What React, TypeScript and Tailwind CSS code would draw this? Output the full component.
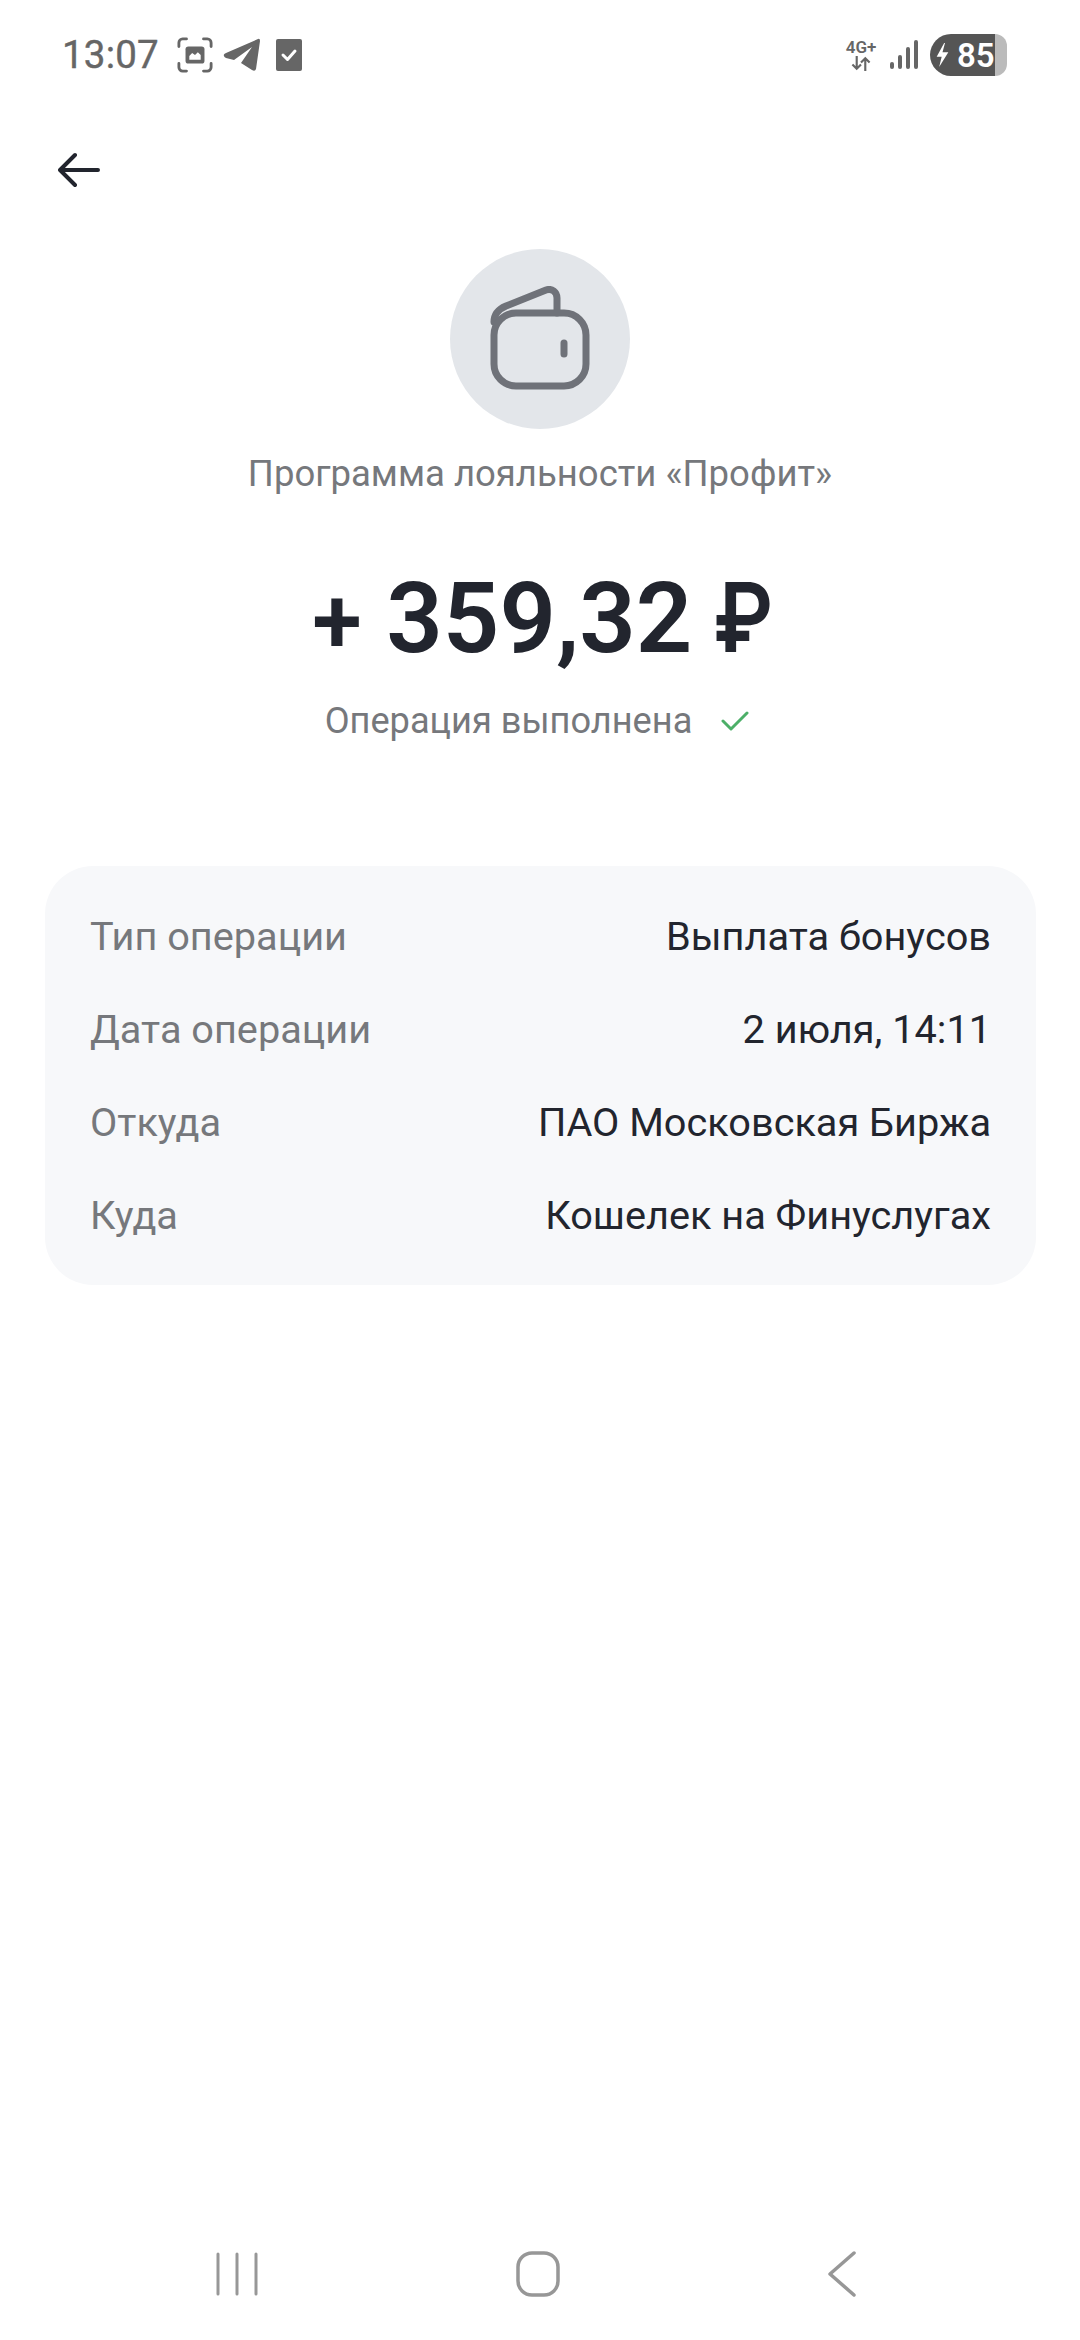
const rows = [
  ["Тип операции", "Выплата бонусов"],
  ["Дата операции", "2 июля, 14:11"],
  ["Откуда", "ПАО Московская Биржа"],
  ["Куда", "Кошелек на Финуслугах"],
];

function StatusBar() {
  return (
    <div className="flex h-[110px] items-center justify-between pl-[62px] pr-[73px] text-[#666666]">
      <div className="flex items-center">
        <span className="text-[38.500px] leading-none font-normal tracking-[0.2px] [-webkit-text-stroke:0.4px_#666666]">13:07</span>
        <svg className="ml-[18px]" width="36" height="36" viewBox="0 0 38 38" fill="none">
          <path d="M2 10V6a4 4 0 0 1 4-4h4M28 2h4a4 4 0 0 1 4 4v4M36 28v4a4 4 0 0 1-4 4h-4M10 36H6a4 4 0 0 1-4-4v-4" stroke="#666666" strokeWidth="3" strokeLinecap="round" />
          <rect x="9" y="10" width="20" height="18" rx="3" fill="#666666" />
          <path d="M13 20l3-3 3 2 3-3 3 3v5H13z" fill="#ffffff" />
        </svg>
        <svg className="ml-[10px]" width="38" height="34" viewBox="0 0 38 34">
          <path d="M1 18 Q0 16 3 15 L35 1 Q37 0 37 3 L33 31 Q32 34 29 32 L18 25 L29 9 L11 22 L3 20 Q1 19 1 18Z" fill="#666666" />
        </svg>
        <svg className="ml-[14px]" width="28" height="32" viewBox="0 0 26 32">
          <rect width="26" height="32" rx="2" fill="#666666" />
          <path d="M7 16l4.500 4.500L19 12" fill="none" stroke="#ffffff" strokeWidth="3" strokeLinecap="round" strokeLinejoin="round" />
        </svg>
      </div>
      <div className="flex items-center">
        <div className="flex w-[32px] flex-col items-center">
          <span className="text-[17px] leading-[17px] font-semibold">4G+</span>
          <svg width="24" height="15" viewBox="0 0 20 14" fill="none" stroke="#666666" strokeWidth="2">
            <path d="M6 0v12M2 8l4 4 4-4M14 14V2M10 6l4-4 4 4" />
          </svg>
        </div>
        <svg className="ml-[13px]" width="28" height="30" viewBox="0 0 28 30" fill="#666666">
          <rect x="0" y="22" width="4" height="7" rx="2" />
          <rect x="8" y="15" width="4" height="14" rx="2" />
          <rect x="16" y="7" width="4" height="22" rx="2" />
          <rect x="24" y="0" width="4" height="29" rx="2" />
        </svg>
        <div className="ml-[12px] flex h-[42px] w-[65px] items-center overflow-hidden rounded-l-[21px] bg-[#555555] text-white">
          <svg className="ml-[5px] shrink-0" width="15" height="26" viewBox="0 0 18 28" preserveAspectRatio="none">
            <path d="M11 1L2 16h6l-3 11 11-16h-7l3-10z" fill="#ffffff" />
          </svg>
          <span className="ml-[7px] text-[33px] leading-none font-semibold">85</span>
        </div>
        <div className="h-[42px] w-[12px] rounded-r-[21px] bg-[#bbbbbb]" />
      </div>
    </div>
  );
}

function WalletIcon() {
  return (
    <svg className="mb-[3px]" width="100" height="104" viewBox="0 0 100 104" fill="none" stroke="#6f7279" strokeWidth="7" strokeLinecap="round" strokeLinejoin="round">
      <path d="M67 27V12c0-6-5-10-11-8L16 20c-7 3-12 8-12 16" />
      <rect x="4" y="27" width="92" height="73" rx="22" />
      <path d="M74 57v11" />
    </svg>
  );
}

function NavBar() {
  return (
    <div className="mt-auto flex h-[120px] items-start pl-[216px] pt-[32px]">
      <svg width="42" height="44" viewBox="0 0 42 44" stroke="#979797" strokeWidth="3" strokeLinecap="round">
        <path d="M2 2v40M21 2v40M40 2v40" />
      </svg>
      <svg className="-mt-[1px] ml-[258px]" width="44" height="46" viewBox="0 0 44 46" fill="none" stroke="#979797" strokeWidth="3.500">
        <rect x="2" y="2" width="40" height="42" rx="14" />
      </svg>
      <svg className="-mt-[1px] ml-[267px]" width="30" height="46" viewBox="0 0 30 46" fill="none" stroke="#979797" strokeWidth="3.500" strokeLinecap="round" strokeLinejoin="round">
        <path d="M27 2L3 23l24 21" />
      </svg>
    </div>
  );
}

export default function App() {
  return (
    <div className="flex h-[2340px] w-[1080px] flex-col bg-white font-['Roboto',sans-serif]">
      <StatusBar />
      <div className="pl-[58px] pt-[42px]">
        <svg className="block" width="42" height="36" viewBox="0 0 42 36" fill="none" stroke="#22252e" strokeWidth="4" strokeLinecap="round" strokeLinejoin="round">
          <path d="M40 18H3M17 3L2 18l15 15" />
        </svg>
      </div>
      <div className="mt-[61px] flex flex-col items-center">
        <div className="flex h-[180px] w-[180px] items-center justify-center rounded-full bg-[#e3e6ea]">
          <WalletIcon />
        </div>
        <p className="mt-[23px] text-[36.500px] leading-[44px] text-[#76787c]">Программа лояльности «Профит»</p>
        <p className="mt-[65px] text-[99px] leading-[112px] font-semibold whitespace-pre text-[#22252e]">
          <span className="text-[90px]">+</span> 359,32{" "}
          <span className="-ml-[4px] -mr-[15px] inline-block origin-left scale-x-[0.86] font-['Inter',sans-serif] text-[96px]">₽</span>
        </p>
        <div className="mr-[6px] mt-[21px] flex items-center">
          <span className="text-[36.200px] leading-[44px] text-[#76787c]">Операция выполнена</span>
          <svg className="ml-[29px]" width="28" height="22" viewBox="0 0 28 22" fill="none" stroke="#4caf68" strokeWidth="3" strokeLinecap="round" strokeLinejoin="round">
            <path d="M2 11l8 8L26 3" />
          </svg>
        </div>
      </div>
      <div className="ml-[45px] mr-[44px] mt-[123px] flex h-[419px] flex-col gap-[49px] rounded-[48px] bg-[#f7f8fa] px-[45px] pt-[49px]">
        {rows.map(([label, value]) => (
          <div key={label} className="flex h-[44px] items-center justify-between text-[39.700px] leading-[44px]">
            <span className="text-[#76787c]">{label}</span>
            <span className="text-[#22252e]">{value}</span>
          </div>
        ))}
      </div>
      <NavBar />
    </div>
  );
}
